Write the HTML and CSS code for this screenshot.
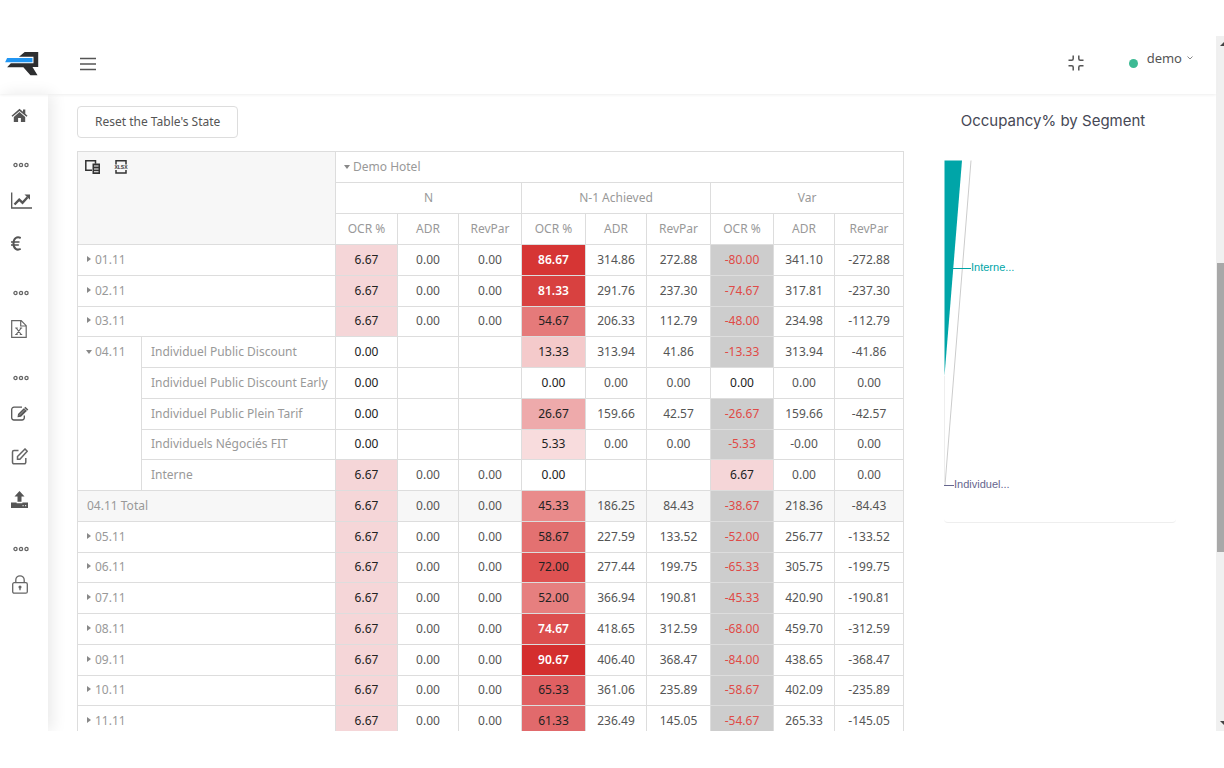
FILE: index.html
```
<!DOCTYPE html>
<html lang="en">
<head>
<meta charset="utf-8">
<meta name="viewport" content="width=device-width, initial-scale=1">
<title>Occupancy by Segment</title>
<link rel="stylesheet" href="styles.css">
</head>
<body>
<div class="window">
<div class="app">
<header class="topbar">
  <a class="logo" href="#" aria-label="Home">
    <svg width="34" height="25" viewBox="18 60 100 74"><path fill="#2d2e30" d="M76 63h40v44h-17l15 25H93L72 108H24l11-12h67V77H59z"/><path fill="#2196f3" d="M24 81h75v12H18z"/></svg>
  </a>
  <button class="icon-btn menu" aria-label="Menu">
    <svg width="18" height="14" viewBox="0 0 18 14" stroke="#555" stroke-width="1.5"><path d="M1 1.5h16M1 7h16M1 12.5h16"/></svg>
  </button>
  <button class="icon-btn compress" aria-label="Exit full screen">
    <svg width="16" height="16" viewBox="0 0 16 16" fill="none" stroke="#555" stroke-width="1.5"><path d="M5.2 0.500v3.200a1.500 1.500 0 0 1-1.500 1.500H.5M10.800 .5v3.200a1.500 1.500 0 0 0 1.500 1.500h3.200M5.200 15.500v-3.200a1.500 1.500 0 0 0-1.500-1.500H.5M10.800 15.500v-3.200a1.500 1.500 0 0 1 1.500-1.500h3.200"/></svg>
  </button>
  <span class="status"></span>
  <button class="icon-btn user">demo
    <svg width="6" height="4" viewBox="0 0 6 4" fill="none" stroke="#888"><path d="M.5.5 3 3 5.500.5"/></svg>
  </button>
</header>
<div class="body">
<nav class="sidebar" aria-label="Main">
  <a href="#" aria-label="Dashboard"><svg width="17" height="15" viewBox="0 0 16 15" fill="#555"><path d="M8 .8 0 7.700l1 1.100L8 2.900l7 5.900 1-1.100-2.200-1.900V1.500h-2.300v2.300z"/><path d="M8 4.100 2.300 8.900V14h4.300v-4h2.800v4h4.300V8.900z"/></svg></a>
  <span class="dots"><svg width="16" height="6" viewBox="0 0 16 6" fill="none" stroke="#666" stroke-width="1.300"><circle cx="2.500" cy="3" r="1.600"/><circle cx="8" cy="3" r="1.600"/><circle cx="13.500" cy="3" r="1.600"/></svg></span>
  <a href="#" aria-label="Trends"><svg width="21" height="17" viewBox="0 0 21 17" fill="none" stroke="#555"><path d="M.7.500v15.500H21" stroke-width="1.300"/><path d="m3.500 12.500 4.700-4.800 3.300 3 5-5.500" stroke-width="2.400"/><path d="M13.500 2.500h5.500v5.300z" fill="#555" stroke="none"/></svg></a>
  <a href="#" aria-label="Revenue"><svg width="10" height="15" viewBox="0 0 10 15" fill="none" stroke="#555"><path d="M9.700 2C6 .2 2.500 2 2.500 7.500s3.500 7.200 7.200 5.400" stroke-width="2"/><path d="M0 6h8.500M0 9h7.800" stroke-width="1.300"/></svg></a>
  <span class="dots"><svg width="16" height="6" viewBox="0 0 16 6" fill="none" stroke="#666" stroke-width="1.300"><circle cx="2.500" cy="3" r="1.600"/><circle cx="8" cy="3" r="1.600"/><circle cx="13.500" cy="3" r="1.600"/></svg></span>
  <a href="#" aria-label="Excel reports"><svg width="16" height="18" viewBox="0 0 16 18" fill="none" stroke="#666" stroke-width="1.200"><path d="M.7.700h9.500l5 5v11.600H.7zM9.700.7V6h5.500"/><path d="m5.200 8 5 6.500M10.200 8l-5 6.500M4.200 8h2.500M8.800 8h2.400M4.200 14.500h2.500M8.800 14.500h2.400"/></svg></a>
  <span class="dots"><svg width="16" height="6" viewBox="0 0 16 6" fill="none" stroke="#666" stroke-width="1.300"><circle cx="2.500" cy="3" r="1.600"/><circle cx="8" cy="3" r="1.600"/><circle cx="13.500" cy="3" r="1.600"/></svg></span>
  <a href="#" aria-label="Edit segments"><svg width="18" height="15" viewBox="0 0 18 15" fill="none" stroke="#555"><path d="M11 1.200H3A2.300 2.300 0 0 0 .7 3.500v8.300A2.300 2.300 0 0 0 3 14h8a2.300 2.300 0 0 0 2.300-2.200V9.500" stroke-width="1.300"/><path d="M6.500 11.300 7 8l7.300-7.200 3 2.800L10 10.800z" fill="#555" stroke="none"/><path d="m8 9.500 6-6" stroke="#ccc" stroke-width=".6"/><path d="m13 1.800 3.200 3" stroke="#fff" stroke-width=".7"/></svg></a>
  <a href="#" aria-label="Edit forecast"><svg width="17" height="17" viewBox="0 0 17 17" fill="none" stroke="#666" stroke-width="1.500"><path d="M7.500 2.500H3A1.500 1.500 0 0 0 1.500 4v10.300A1.500 1.500 0 0 0 3 15.800h10.300a1.500 1.500 0 0 0 1.500-1.500V10"/><path d="M6.500 11.200V8.500L14 1l2.200 2.300-7.300 7.900z"/></svg></a>
  <a href="#" aria-label="Upload"><svg width="17" height="17" viewBox="0 0 17 17" fill="#555"><path d="M8.500 0 3.500 5.600h3v5.200h4V5.600h3z"/><path d="M0 11.500h5.600v.7h5.800v-.7H17V17H0z"/><path fill="#ddd" d="M11.500 14h1.200v1.200h-1.200zM14 14h1.200v1.200H14z"/></svg></a>
  <span class="dots"><svg width="16" height="6" viewBox="0 0 16 6" fill="none" stroke="#666" stroke-width="1.300"><circle cx="2.500" cy="3" r="1.600"/><circle cx="8" cy="3" r="1.600"/><circle cx="13.500" cy="3" r="1.600"/></svg></span>
  <a href="#" aria-label="Security"><svg width="18" height="19" viewBox="-1 0 18 19" fill="none" stroke="#666" stroke-width="1.300"><rect x=".7" y="7.700" width="14.600" height="10.500" rx="1.500"/><path d="M3.800 7.700V5a4.200 4.200 0 0 1 8.400 0v2.700"/><circle cx="8" cy="12" r=".9" fill="#666"/><path d="M8 12v3.200"/></svg></a>
</nav>
<main class="content">
<section class="report">
<button class="reset">Reset the Table's State</button>
<table class="pivot">
<colgroup><col class="w64"><col class="w194"><col class="w62"><col class="w61"><col class="w63"><col class="w64"><col class="w61"><col class="w64"><col class="w63"><col class="w61"><col class="w69"></colgroup>
<thead>
<tr><td class="corner" colspan="2" rowspan="3"><div class="tools">
  <button class="icon-btn" aria-label="Field chooser"><svg width="15" height="14" viewBox="0 0 15 14" fill="none" stroke="#333" stroke-width="1.500"><path d="M7 10.200H.8V.8h9.700v3"/><path fill="#333" stroke="none" d="M7.500 3.500H15V14H7.500z"/><path stroke="#fff" stroke-width="1.100" d="M9 6h4.500M9 9h4.500M9 11.700h4.500"/></svg></button>
  <button class="icon-btn" aria-label="Export to XLSX"><svg width="14" height="14" viewBox="0 0 14 14" fill="none" stroke="#333" stroke-width="1.500"><path d="M2 4.500V.8h10v3.700M2 10v3h10v-3"/><text class="xlsx" x="7" y="9.200" text-anchor="middle">XLSX</text></svg></button>
</div></td><th class="hotel" colspan="9"><span class="down"></span>Demo Hotel</th></tr>
<tr><th colspan="3">N</th><th colspan="3">N-1 Achieved</th><th colspan="3">Var</th></tr>
<tr><th>OCR %</th><th>ADR</th><th>RevPar</th><th>OCR %</th><th>ADR</th><th>RevPar</th><th>OCR %</th><th>ADR</th><th>RevPar</th></tr>
</thead>
<tbody>
<tr><th colspan="2"><span class="right"></span>01.11</th><td class="ocr pink">6.67</td><td>0.00</td><td>0.00</td><td class="ocr strong h87">86.67</td><td>314.86</td><td>272.88</td><td class="neg">-80.00</td><td>341.10</td><td>-272.88</td></tr>
<tr><th colspan="2"><span class="right"></span>02.11</th><td class="ocr pink">6.67</td><td>0.00</td><td>0.00</td><td class="ocr strong h81">81.33</td><td>291.76</td><td>237.30</td><td class="neg">-74.67</td><td>317.81</td><td>-237.30</td></tr>
<tr><th colspan="2"><span class="right"></span>03.11</th><td class="ocr pink">6.67</td><td>0.00</td><td>0.00</td><td class="ocr h55">54.67</td><td>206.33</td><td>112.79</td><td class="neg">-48.00</td><td>234.98</td><td>-112.79</td></tr>
<tr><th class="group" rowspan="5"><span class="down"></span>04.11</th><th>Individuel Public Discount</th><td class="ocr">0.00</td><td></td><td></td><td class="ocr h13">13.33</td><td>313.94</td><td>41.86</td><td class="neg">-13.33</td><td>313.94</td><td>-41.86</td></tr>
<tr><th>Individuel Public Discount Early</th><td class="ocr">0.00</td><td></td><td></td><td class="ocr">0.00</td><td>0.00</td><td>0.00</td><td class="ocr">0.00</td><td>0.00</td><td>0.00</td></tr>
<tr><th>Individuel Public Plein Tarif</th><td class="ocr">0.00</td><td></td><td></td><td class="ocr h27">26.67</td><td>159.66</td><td>42.57</td><td class="neg">-26.67</td><td>159.66</td><td>-42.57</td></tr>
<tr><th>Individuels Négociés FIT</th><td class="ocr">0.00</td><td></td><td></td><td class="ocr h5">5.33</td><td>0.00</td><td>0.00</td><td class="neg">-5.33</td><td>-0.00</td><td>0.00</td></tr>
<tr><th>Interne</th><td class="ocr pink">6.67</td><td>0.00</td><td>0.00</td><td class="ocr">0.00</td><td></td><td></td><td class="ocr pink">6.67</td><td>0.00</td><td>0.00</td></tr>
<tr class="total"><th colspan="2">04.11 Total</th><td class="ocr pink">6.67</td><td>0.00</td><td>0.00</td><td class="ocr h45">45.33</td><td>186.25</td><td>84.43</td><td class="neg">-38.67</td><td>218.36</td><td>-84.43</td></tr>
<tr><th colspan="2"><span class="right"></span>05.11</th><td class="ocr pink">6.67</td><td>0.00</td><td>0.00</td><td class="ocr h59">58.67</td><td>227.59</td><td>133.52</td><td class="neg">-52.00</td><td>256.77</td><td>-133.52</td></tr>
<tr><th colspan="2"><span class="right"></span>06.11</th><td class="ocr pink">6.67</td><td>0.00</td><td>0.00</td><td class="ocr h72">72.00</td><td>277.44</td><td>199.75</td><td class="neg">-65.33</td><td>305.75</td><td>-199.75</td></tr>
<tr><th colspan="2"><span class="right"></span>07.11</th><td class="ocr pink">6.67</td><td>0.00</td><td>0.00</td><td class="ocr h52">52.00</td><td>366.94</td><td>190.81</td><td class="neg">-45.33</td><td>420.90</td><td>-190.81</td></tr>
<tr><th colspan="2"><span class="right"></span>08.11</th><td class="ocr pink">6.67</td><td>0.00</td><td>0.00</td><td class="ocr strong h75">74.67</td><td>418.65</td><td>312.59</td><td class="neg">-68.00</td><td>459.70</td><td>-312.59</td></tr>
<tr><th colspan="2"><span class="right"></span>09.11</th><td class="ocr pink">6.67</td><td>0.00</td><td>0.00</td><td class="ocr strong h91">90.67</td><td>406.40</td><td>368.47</td><td class="neg">-84.00</td><td>438.65</td><td>-368.47</td></tr>
<tr><th colspan="2"><span class="right"></span>10.11</th><td class="ocr pink">6.67</td><td>0.00</td><td>0.00</td><td class="ocr h65">65.33</td><td>361.06</td><td>235.89</td><td class="neg">-58.67</td><td>402.09</td><td>-235.89</td></tr>
<tr><th colspan="2"><span class="right"></span>11.11</th><td class="ocr pink">6.67</td><td>0.00</td><td>0.00</td><td class="ocr h61">61.33</td><td>236.49</td><td>145.05</td><td class="neg">-54.67</td><td>265.33</td><td>-145.05</td></tr>
</tbody>
</table>
</section>
<section class="chart">
  <h2>Occupancy% by Segment</h2>
  <svg width="232" height="362" viewBox="0 0 232 362" role="img" aria-label="Occupancy by segment">
    <path fill="#00a5a8" d="M.5.500H18L.5 216z"/>
    <path d="M.5 216v106" fill="none" stroke="#eee"/><path d="M27 .5 1 325" fill="none" stroke="#ccc"/>
    <path d="M9 108.500h18" stroke="#00a5a8"/><path d="M0 325.500h10" stroke="#66668e"/>
    <text x="27" y="111" fill="#00a5a8">Interne...</text>
    <text x="10" y="328" fill="#66668e">Individuel...</text>
  </svg>
</section>
</main>
</div>
</div>
<div class="scroll" aria-hidden="true">
  <svg width="8" height="17" viewBox="0 0 8 17"><path fill="#444" d="m4 10 5-5v5z"/></svg>
  <span class="before"></span><span class="thumb"></span><span class="after"></span>
  <svg width="8" height="17" viewBox="0 0 8 17"><path fill="#444" d="m4 7 5 5V7z"/></svg>
</div>
</div>
</body>
</html>
```
FILE: styles.css
```
* { box-sizing: border-box; }
body {
  margin: 0;
  height: 100vh;
  padding: 36px 0 37px;
  background: #fff;
  color: #555;
  font: 12px/18px "Noto Sans", "Open Sans", sans-serif;
}
svg { display: block; flex: none; }
button { font: inherit; color: inherit; cursor: pointer; }
.window { display: flex; height: 100%; overflow: hidden; }
.app { flex: 1; min-width: 0; display: flex; flex-direction: column; }

.topbar {
  display: flex;
  align-items: center;
  flex: none;
  height: 58px;
  padding: 0 23px 4px 5px;
  box-shadow: 0 1px 3px #eee;
  z-index: 1;
}
.icon-btn { padding: 0; border: 0; background: none; }
.menu { margin-left: 40px; padding-top: 2px; }
.compress { margin-left: auto; }
.status { width: 9px; height: 9px; margin: 0 9px 0 45px; border-radius: 50%; background: #3dba94; }
.user { display: flex; align-items: center; gap: 5px; padding-bottom: 10px; font-size: 13px; }

.body { flex: 1; display: flex; min-height: 0; }
.sidebar { flex: none; width: 48px; padding-left: 11px; box-shadow: 4px 0 16px #e9e9e9; }
.sidebar a { display: flex; align-items: center; height: 43px; }
.dots { display: flex; align-items: center; height: 28px; margin-top: 14px; padding-left: 2px; }

.content {
  flex: 1;
  min-width: 0;
  display: grid;
  grid-template-columns: 1fr 232px;
  gap: 40px;
  align-items: start;
  padding: 12px 40px 0 30px;
  overflow: hidden;
}
.report { min-width: 0; margin-left: -1px; }
.reset {
  display: block;
  height: 32px;
  margin-bottom: 13px;
  padding: 0 17px;
  border: 1px solid #ddd;
  border-radius: 4px;
  background: #fff;
}
.pivot {
  width: 100%;
  height: 586px;
  table-layout: fixed;
  border-collapse: collapse;
}
.pivot thead tr { height: 31px; }
.w61 { width: 61px; } .w62 { width: 62px; } .w63 { width: 63px; }
.w64 { width: 64px; } .w69 { width: 69px; } .w194 { width: 194px; }
.pivot th, .pivot td {
  padding: 0 9px;
  border: 1px solid #ddd;
  font-weight: 400;
  text-align: center;
  white-space: nowrap;
}
.pivot td { padding: 0; }
.pivot th { color: #999; }
.pivot tbody th, .pivot .hotel { text-align: left; }
.pivot .hotel { padding-left: 8px; }
.pivot .group { vertical-align: top; padding-top: 6px; }
.pivot .corner { vertical-align: top; background: #f7f7f7; padding: 8px 7px; }
.tools { display: flex; gap: 14px; }
.xlsx { font: 700 5px "Liberation Sans", sans-serif; fill: #333; stroke: none; }
.right, .down { display: inline-block; vertical-align: 2px; }
.right { border-left: 4px solid #888; border-top: 3px solid transparent; border-bottom: 3px solid transparent; margin-right: 4px; }
.down { border-top: 4px solid #888; border-left: 3px solid transparent; border-right: 3px solid transparent; margin-right: 3px; }
.group .down { margin-left: -1px; }
.total { background: #f7f7f7; }
.pivot .ocr { color: #222; }
.pivot .neg { color: #e04a46; background: #cdcdcd; }
.pivot .strong { color: #fff; font-weight: 600; }
.pink { background: #f5d6d8; }
.h5 { background: #f8dcdd; } .h13 { background: #f4cacb; } .h27 { background: #eeaaab; }
.h45 { background: #e98b8b; } .h52 { background: #e67f7f; } .h55 { background: #e57a7a; }
.h59 { background: #e37171; } .h61 { background: #e16a6c; } .h65 { background: #e06062; }
.h72 { background: #de5252; } .h75 { background: #dc4e4e; } .h81 { background: #d84140; }
.h87 { background: #d63534; } .h91 { background: #d42e2e; }

.chart { border-bottom: 1px solid #eee; border-radius: 4px; }
.chart h2 {
  margin: 4px 14px 29px 0;
  font: 400 15px/21px Inter, "Open Sans", sans-serif;
  color: #464855;
  text-align: center;
}
.chart text { font: 11px "Liberation Sans", Arial, sans-serif; }

.scroll { flex: none; width: 8px; display: flex; flex-direction: column; background: #f0f0f0; }
.before { flex: 210; }
.thumb { flex: 289; margin-left: 1px; background: #a8a8a8; }
.after { flex: 162; }
```
